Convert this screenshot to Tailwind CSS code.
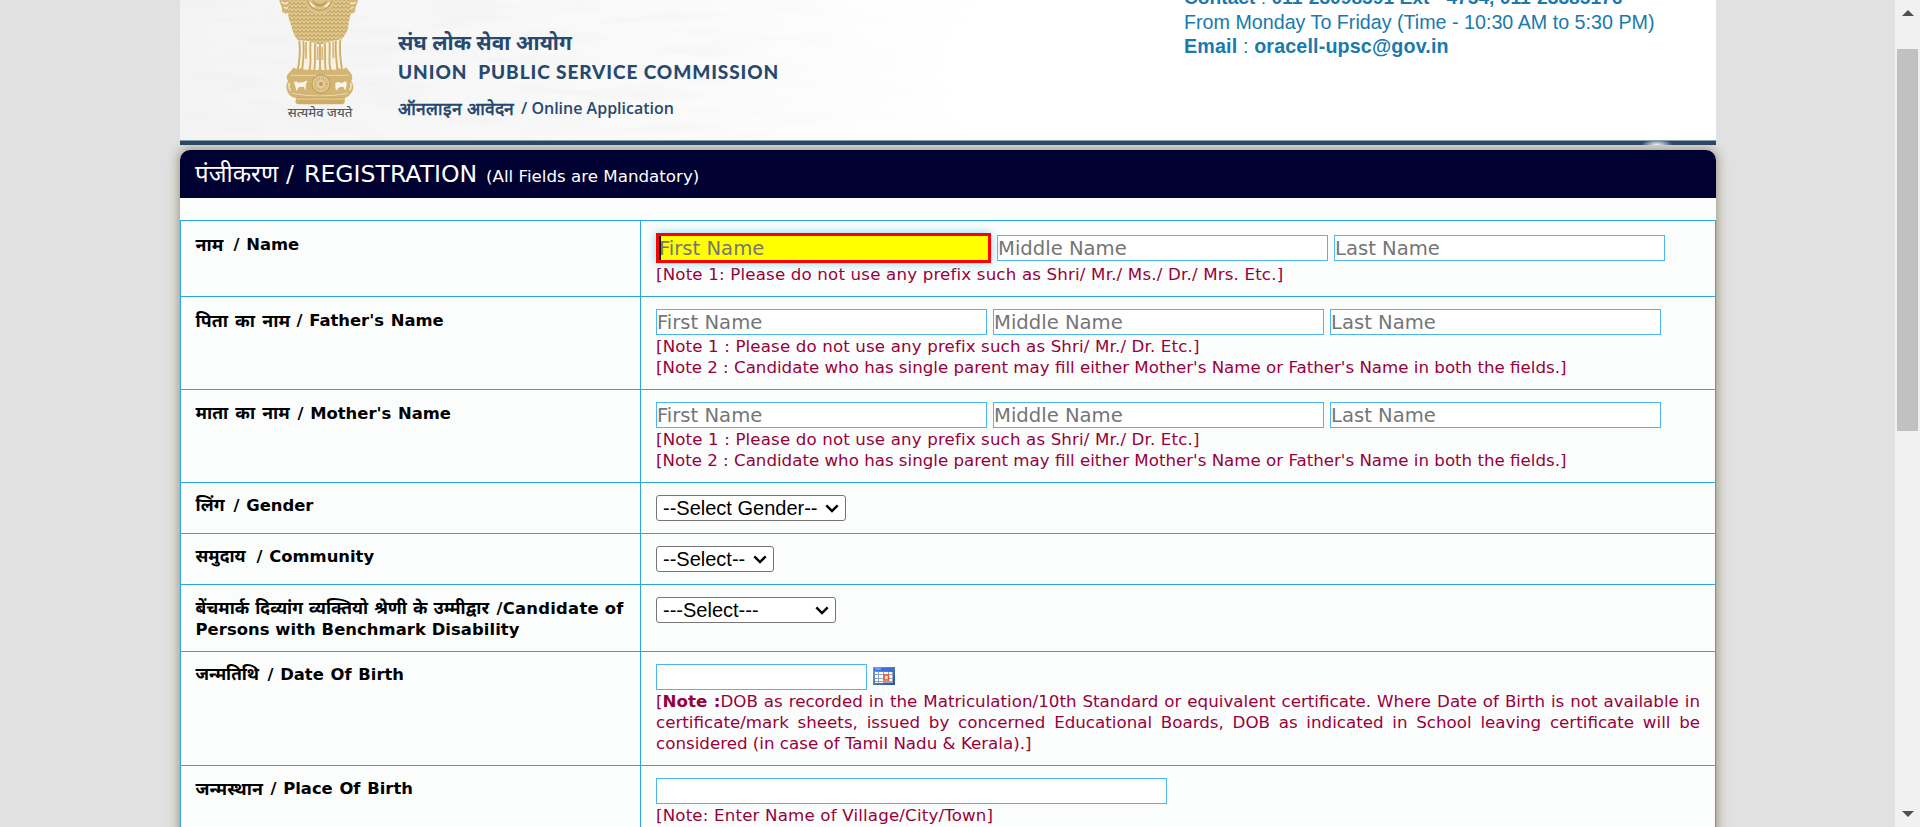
<!DOCTYPE html>
<html lang="hi">
<head>
<meta charset="utf-8">
<title>UPSC Online Application</title>
<script src="https://cdn.jsdelivr.net/npm/@tailwindcss/browser@4"></script>
</head>
<body class="h-[827px] overflow-hidden bg-[#e1e1e1] font-['DejaVu_Sans','Noto_Sans',sans-serif] text-black">
<div class="flex h-[827px]">
  <div class="flex h-[827px] w-[1895px] flex-col overflow-hidden pl-[180px]">

    <!-- Banner -->
    <header class="relative z-10 flex h-[145px] w-[1536px] shrink-0 flex-col">
      <div class="relative flex h-[140px] bg-linear-to-r from-[#f4f4f4] from-0% via-[#fafafa] via-30% to-white to-50%">
        <svg class="absolute inset-0 opacity-40" width="800" height="140">
          <defs>
            <filter id="wave" x="0" y="0" width="100%" height="100%"><feTurbulence type="fractalNoise" baseFrequency="0.012 0.09" numOctaves="2" seed="4"/><feColorMatrix values="0 0 0 0 0.8  0 0 0 0 0.8  0 0 0 0 0.8  1.6 0 0 0 -0.68"/></filter>
            <linearGradient id="fade"><stop offset="0" stop-color="#fff"/><stop offset=".6" stop-color="#fff"/><stop offset="1" stop-color="#000"/></linearGradient>
            <mask id="fm"><rect width="800" height="140" fill="url(#fade)"/></mask>
          </defs>
          <g mask="url(#fm)"><rect width="800" height="140" filter="url(#wave)"/></g>
        </svg>
        <div class="relative ml-[90px] flex w-[128px] flex-col">
          <svg width="110" height="105" viewBox="0 0 330 315" fill="none">
            <defs>
              <pattern id="fur" width="12" height="12" patternUnits="userSpaceOnUse"><path d="M1 1l5 8 5-8" stroke="#f3e6c4" stroke-width="2.2" fill="none"/></pattern>
            </defs>
            <!-- side lions -->
            <path d="M28 0C30 14 38 20 36 34C44 44 56 42 62 30L66 0Z" fill="#d3b577"/>
            <path d="M264 0C262 14 254 20 256 34C248 44 238 42 232 30L228 0Z" fill="#d3b577"/>
            <path d="M34 6q10 8 20 2M42 22q8 6 16-2M258 6q-10 8-20 2M250 22q-8 6-16-2" stroke="#f7efd9" stroke-width="4"/>
            <!-- mane and chest -->
            <path d="M56 0C54 30 52 48 62 70C68 96 72 110 88 124L118 126L150 138L180 126L210 122C226 108 236 90 236 66C246 40 242 20 238 0Z" fill="#cdac66"/>
            <path d="M56 0C54 30 52 48 62 70C68 96 72 110 88 124L118 126L150 138L180 126L210 122C226 108 236 90 236 66C246 40 242 20 238 0Z" fill="url(#fur)"/>
            <path d="M104 0C106 26 126 42 150 42C172 42 190 24 192 0Z" fill="#dcc28a"/>
            <path d="M112 2q8 26 38 30q28-4 36-30M128 2q6 14 22 16q14-2 20-16M134 8q14 12 30 0" stroke="#c29f58" stroke-width="4"/>
            <path d="M120 8q6 10 14 12M178 8q-6 10-14 12" stroke="#fbf5e6" stroke-width="5"/>
            <!-- legs -->
            <path d="M84 120C86 160 84 190 76 214L222 214C212 190 214 160 214 118L180 124L150 134L118 124Z" fill="#f8f1df"/>
            <path d="M88 122C92 160 88 190 82 214M100 124C104 160 98 190 96 214M122 124C118 156 126 186 118 212M136 130C132 160 138 190 132 214M150 134V210M164 130C168 160 162 190 168 214M178 124C182 156 174 186 182 212M198 122C194 160 202 190 202 214M211 120C207 160 213 190 217 214" stroke="#cdae6c" stroke-width="5.5"/>
            <path d="M108 126v50M143 140v40M157 140v40M190 124v50" stroke="#d8bc80" stroke-width="6"/>
            <!-- abacus -->
            <path d="M72 202Q80 212 92 204Q106 214 118 206Q134 216 150 206Q166 216 182 206Q194 214 206 204Q220 212 228 202L244 222Q250 232 244 242Q256 262 244 278Q234 292 222 294H78Q62 292 54 278Q44 262 54 242Q46 232 54 222Z" fill="#d2b473"/>
            <path d="M62 226H238M66 280Q150 296 234 280" stroke="#e9d9ae" stroke-width="3"/>
            <circle cx="153" cy="252" r="27" fill="#e3cf9e" stroke="#c3a25a" stroke-width="4"/>
            <circle cx="153" cy="252" r="17" stroke="#cbab66" stroke-width="9" stroke-dasharray="3 3"/>
            <circle cx="153" cy="252" r="6" fill="#c39e4e"/>
            <path d="M72 246q8-4 12 2l18-2q8-6 10-2l-4 8l-2 20l-5-12l-14 1l-8 12l-3-14z" fill="#faf5e8"/>
            <path d="M196 250q8-8 18 0l12-6q6 2 4 10l-4 18l-6-12l-12 2l-10 10l-2-14z" fill="#faf5e8"/>
            <path d="M58 248q-4 12 4 24M242 248q4 12-4 24" stroke="#f3e8cb" stroke-width="4"/>
            <!-- plinth -->
            <path d="M80 290H224V306Q222 313 212 313H90Q78 313 76 306Z" fill="#cdac66"/>
            <path d="M80 297H224" stroke="#e8d5a2" stroke-width="3"/>
          </svg>
          <div class="-mt-[2px] ml-[17px] w-[66px] text-center font-['Noto_Sans',sans-serif] text-[13px] font-medium leading-[18px] whitespace-nowrap text-[#5a5a5a]">सत्यमेव जयते</div>
        </div>
        <div class="relative flex w-[786px] flex-col pt-[27px] text-[#27496f]">
          <div class="h-[33px] text-[20.8px] font-bold leading-[30px] whitespace-nowrap"><span class="font-['Noto_Sans',sans-serif]">संघ लोक सेवा आयोग</span></div>
          <div class="h-[34px] font-['Lato',sans-serif] text-[19px] font-black leading-[24px] tracking-[0.92px] whitespace-pre">UNION  PUBLIC SERVICE COMMISSION</div>
          <div class="flex h-[28px] font-['Open_Sans',sans-serif] text-[16px] font-semibold leading-[28px] whitespace-pre"><span class="w-[123px] text-[17.4px] font-bold">ऑनलाइन आवेदन</span>/ Online Application</div>
        </div>
        <div class="relative -mt-[14px] font-['Liberation_Sans',sans-serif] text-[19.7px] leading-[24px] whitespace-nowrap text-[#1a79ad]">
          <div class="text-[19.2px] font-bold">Contact <span class="font-normal">:</span> 011-23098591 Ext - 4754, 011-23385176</div>
          <div>From Monday To Friday (Time - 10:30 AM to 5:30 PM)</div>
          <div class="font-bold tracking-[0.15px]">Email <span class="font-normal">:</span> oracell-upsc@gov.in</div>
        </div>
      </div>
      <div class="relative h-[5px] overflow-hidden border-t border-[#8a9bab] bg-[#2b4766]">
        <div class="absolute -top-[2px] left-[1461px] h-[12px] w-[32px] bg-[radial-gradient(closest-side,#f5f8fa,#9db0c0_45%,transparent)]"></div>
      </div>
    </header>

    <!-- Registration panel -->
    <main class="mt-[5px] h-[720px] w-[1536px] shrink-0 rounded-t-[10px] bg-[#fbfdfd] shadow-[0_0_12px_1px_#978f78]">
      <div class="flex h-[48px] items-center rounded-t-[10px] bg-[#000031] pt-[3px] pl-[15px] text-white">
        <div class="flex items-baseline whitespace-nowrap leading-[45px]">
          <span class="w-[91px] text-[24px]">पंजीकरण</span><span class="w-[18px] text-[23.4px]">/</span><span class="w-[182px] text-[23.6px]">REGISTRATION</span><span class="text-[16.7px]">(All Fields are Mandatory)</span>
        </div>
      </div>

      <div class="mt-[22px] border-x border-[#2ba6e6] text-[16.67px] leading-[21px]">
        <div class="flex h-[76px] border-t border-[#2ba6e6]">
          <div class="flex w-[459px] pt-[13px] pl-[14.5px] text-[16.4px] font-bold whitespace-nowrap [word-spacing:1px]"><span class="w-[38px] text-[17.8px]">नाम</span>/ Name</div>
          <div class="flex-1 border-l border-[#2ba6e6] pt-[12px] pl-[15px]">
            <div class="flex items-center gap-[6px] text-[19.6px] leading-[26px] text-[#757575]">
              <div class="relative h-[30px] w-[335px] border-3 border-[#ff0000] bg-[#ffff00] leading-[25px] shadow-[0_0_10px_#7fd6ee]"><span class="absolute top-0 left-0 h-6 w-[2px] bg-black"></span>First Name</div>
              <div class="h-[26px] w-[331px] border border-[#4cb5f5] bg-white">Middle Name</div>
              <div class="h-[26px] w-[331px] border border-[#4cb5f5] bg-white">Last Name</div>
            </div>
            <div class="pt-[1px] tracking-[0.17px] text-[#99003a]">[Note 1: Please do not use any prefix such as Shri/ Mr./ Ms./ Dr./ Mrs. Etc.]</div>
          </div>
        </div>

        <div class="flex h-[93px] border-t border-[#2ba6e6]">
          <div class="flex w-[459px] pt-[13px] pl-[14.5px] text-[16.4px] font-bold whitespace-nowrap [word-spacing:1px]"><span class="w-[101px] text-[17.8px]">पिता का नाम</span>/ Father's Name</div>
          <div class="flex-1 border-l border-[#2ba6e6] pt-[12px] pl-[15px]">
            <div class="flex items-center gap-[6px] text-[19.6px] leading-[26px] text-[#757575]">
              <div class="h-[26px] w-[331px] border border-[#4cb5f5] bg-white">First Name</div>
              <div class="h-[26px] w-[331px] border border-[#4cb5f5] bg-white">Middle Name</div>
              <div class="h-[26px] w-[331px] border border-[#4cb5f5] bg-white">Last Name</div>
            </div>
            <div class="pt-[1px] text-[#99003a]"><span class="tracking-[0.14px]">[Note 1 : Please do not use any prefix such as Shri/ Mr./ Dr. Etc.]</span><br>[Note 2 : Candidate who has single parent may fill either Mother's Name or Father's Name in both the fields.]</div>
          </div>
        </div>

        <div class="flex h-[93px] border-t border-[#2ba6e6]">
          <div class="flex w-[459px] pt-[13px] pl-[14.5px] text-[16.4px] font-bold whitespace-nowrap [word-spacing:1px]"><span class="w-[102px] text-[17.6px]">माता का नाम</span>/ Mother's Name</div>
          <div class="flex-1 border-l border-[#2ba6e6] pt-[12px] pl-[15px]">
            <div class="flex items-center gap-[6px] text-[19.6px] leading-[26px] text-[#757575]">
              <div class="h-[26px] w-[331px] border border-[#4cb5f5] bg-white">First Name</div>
              <div class="h-[26px] w-[331px] border border-[#4cb5f5] bg-white">Middle Name</div>
              <div class="h-[26px] w-[331px] border border-[#4cb5f5] bg-white">Last Name</div>
            </div>
            <div class="pt-[1px] text-[#99003a]"><span class="tracking-[0.14px]">[Note 1 : Please do not use any prefix such as Shri/ Mr./ Dr. Etc.]</span><br>[Note 2 : Candidate who has single parent may fill either Mother's Name or Father's Name in both the fields.]</div>
          </div>
        </div>

        <div class="flex h-[51px] border-t border-[#2ba6e6]">
          <div class="flex w-[459px] pt-[12px] pl-[14.5px] text-[16.4px] font-bold whitespace-nowrap [word-spacing:1px]"><span class="w-[38px] text-[17.6px]">लिंग</span>/ Gender</div>
          <div class="flex-1 border-l border-[#2ba6e6] pt-[12px] pl-[15px]">
            <div class="flex h-[26px] w-[190px] items-center justify-between rounded-[3px] border border-[#767676] bg-white pr-[6px] pl-[6px] font-['Liberation_Sans',sans-serif] text-[20px] leading-[24px]">--Select Gender--<svg width="14" height="9" viewBox="0 0 14 9"><path d="M1.3 1.3L7 7L12.7 1.3" fill="none" stroke="#000" stroke-width="2.4"/></svg></div>
          </div>
        </div>

        <div class="flex h-[51px] border-t border-[#2ba6e6]">
          <div class="flex w-[459px] pt-[12px] pl-[14.5px] text-[16.4px] font-bold whitespace-nowrap [word-spacing:1px]"><span class="w-[61px] text-[17.4px]">समुदाय</span>/ Community</div>
          <div class="flex-1 border-l border-[#2ba6e6] pt-[12px] pl-[15px]">
            <div class="flex h-[26px] w-[118px] items-center justify-between rounded-[3px] border border-[#767676] bg-white pr-[6px] pl-[6px] font-['Liberation_Sans',sans-serif] text-[20px] leading-[24px]">--Select--<svg width="14" height="9" viewBox="0 0 14 9"><path d="M1.3 1.3L7 7L12.7 1.3" fill="none" stroke="#000" stroke-width="2.4"/></svg></div>
          </div>
        </div>

        <div class="flex h-[67px] border-t border-[#2ba6e6]">
          <div class="w-[459px] pt-[13px] pl-[14.5px] text-[16.4px] font-bold whitespace-nowrap"><div class="flex h-[21px]"><span class="w-[301px] text-[17.4px]">बेंचमार्क दिव्यांग व्यक्तियो श्रेणी के उम्मीद्वार</span><span class="tracking-[0.25px]">/Candidate of</span></div><div class="tracking-[0.06px]">Persons with Benchmark Disability</div></div>
          <div class="flex-1 border-l border-[#2ba6e6] pt-[12px] pl-[15px]">
            <div class="flex h-[26px] w-[180px] items-center justify-between rounded-[3px] border border-[#767676] bg-white pr-[6px] pl-[6px] font-['Liberation_Sans',sans-serif] text-[20px] leading-[24px]">---Select---<svg width="14" height="9" viewBox="0 0 14 9"><path d="M1.3 1.3L7 7L12.7 1.3" fill="none" stroke="#000" stroke-width="2.4"/></svg></div>
          </div>
        </div>

        <div class="flex h-[114px] border-t border-[#2ba6e6]">
          <div class="flex w-[459px] pt-[12px] pl-[14.5px] text-[16.4px] font-bold whitespace-nowrap [word-spacing:1px]"><span class="w-[72px] text-[17.2px]">जन्मतिथि</span>/ Date Of Birth</div>
          <div class="flex-1 border-l border-[#2ba6e6] pt-[12px] pl-[15px]">
            <div class="flex items-center gap-[6px]">
              <div class="h-[26px] w-[211px] border border-[#4cb5f5] bg-white"></div>
              <svg class="-mt-[2px]" width="22" height="18" viewBox="0 0 22 18">
                <defs><linearGradient id="cal" x2="1" y2="1"><stop offset="0" stop-color="#7f9fcd"/><stop offset="1" stop-color="#2f4e82"/></linearGradient></defs>
                <rect width="22" height="18" fill="url(#cal)"/><path d="M1 1h20v3H1z" fill="#3a70dc"/><path d="M2 2h6" stroke="#a9c6fa"/>
                <path d="M2 5h18v11H2z" fill="#8aa5cc"/>
                <path d="M2 5h3v2H2zM6 5h4v2H6zM11 5h4v2h-4zM16 5h3v2h-3zM2 8h3v3H2zM6 8h4v3H6zM11 8h4v3h-4zM16 8h3v3h-3zM2 12h3v2H2zM6 12h4v2H6zM11 12h4v2h-4zM16 12h3v2h-3zM2 15h3v1H2zM6 15h4v1H6z" fill="#fff"/>
                <rect x="11" y="8" width="4.5" height="5" fill="#fbe3d8" stroke="#ee5426" stroke-width="1.5"/>
              </svg>
            </div>
            <div class="w-[1044px] pt-[1px] text-justify text-[16.7px] text-[#99003a]">[<b>Note :</b>DOB as recorded in the Matriculation/10th Standard or equivalent certificate. Where Date of Birth is not available in certificate/mark sheets, issued by concerned Educational Boards, DOB as indicated in School leaving certificate will be considered (in case of Tamil Nadu &amp; Kerala).]</div>
          </div>
        </div>

        <div class="flex h-[100px] border-t border-[#2ba6e6]">
          <div class="flex w-[459px] pt-[12px] pl-[14.5px] text-[16.4px] font-bold whitespace-nowrap [word-spacing:1px]"><span class="w-[75px] text-[17.8px]">जन्मस्थान</span>/ Place Of Birth</div>
          <div class="flex-1 border-l border-[#2ba6e6] pt-[12px] pl-[15px]">
            <div class="h-[26px] w-[511px] border border-[#4cb5f5] bg-white"></div>
            <div class="pt-[1px] tracking-[0.17px] text-[#99003a]">[Note: Enter Name of Village/City/Town]</div>
          </div>
        </div>
      </div>
    </main>
  </div>

  <!-- Scrollbar -->
  <div class="flex h-[827px] w-[25px] flex-col items-center bg-[#f1f1f1] pt-[10px] pb-[10px]">
    <svg width="12" height="6" viewBox="0 0 12 6"><path d="M0 6L6 0L12 6Z" fill="#505050"/></svg>
    <div class="mt-[33px] h-[382px] w-[21px] bg-[#c1c1c1]"></div>
    <svg class="mt-auto" width="12" height="6" viewBox="0 0 12 6"><path d="M0 0L6 6L12 0Z" fill="#505050"/></svg>
  </div>
</div>
</body>
</html>
